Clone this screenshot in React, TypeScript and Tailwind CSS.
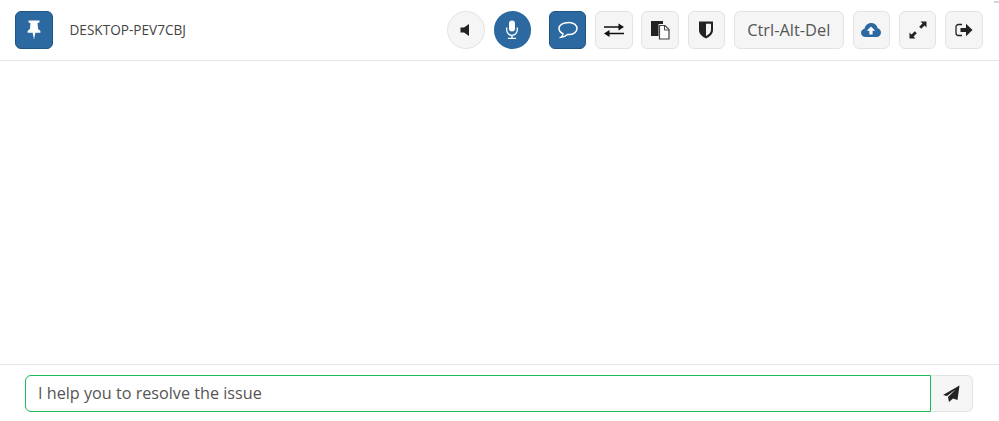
import type { ReactNode } from 'react'

const btnBase =
  'flex h-[38px] w-[37.5px] shrink-0 items-center justify-center rounded-md border border-[#e3e3e3] bg-[#f5f5f5]'
const btnActive =
  'flex h-[38px] w-[37.5px] shrink-0 items-center justify-center rounded-md border border-[#1f5585] bg-[#2c69a0]'

function Icon({ children }: { children: ReactNode }) {
  return (
    <svg width={22} height={22} viewBox="0 0 22 22">
      {children}
    </svg>
  )
}

export default function App() {
  return (
    <div className="relative flex h-[421px] w-[999px] flex-col bg-white font-['Open_Sans',sans-serif] text-[#333]">
      <div className="absolute top-px right-0 h-[2px] w-[5px] bg-[#d5d5d5]" />

      {/* Top toolbar */}
      <div className="flex h-[61px] items-center border-b border-[#e5e5e5] pr-[16.5px] pl-[15px]">
        <button className={btnActive}>
          <Icon>
            <path d="M5.5 1.500h11v1.800l-2 1 .6 5.700 2.300 2v1.800h-5l-1.400 6.700-1.400-6.700h-5v-1.800l2.300-2 .6-5.700-2-1z" fill="#fff" />
          </Icon>
        </button>
        <span className="ml-[17px] text-[13.6px] leading-none text-[#444]">DESKTOP-PEV7CBJ</span>

        <div className="ml-auto flex items-center gap-[8.75px]">
          <button className="flex h-[38px] w-[38px] items-center justify-center rounded-full border border-[#e3e3e3] bg-[#f5f5f5]">
            <Icon>
              <path d="M5.5 8.500h3.500l5-3.500v12l-5-3.500H5.500z" fill="#222" />
            </Icon>
          </button>
          <button className="flex h-[38px] w-[37.5px] items-center justify-center rounded-full bg-[#2c69a0]">
            <Icon>
              <rect x="8" y="1.500" width="6" height="11" rx="3" fill="#fff" />
              <path d="M5.700 8.500v2.500a5.300 5.300 0 0 0 10.600 0V8.500" fill="none" stroke="#fff" strokeWidth="1.300" />
              <path d="M11 16.300v2.500M7 19.300h8" fill="none" stroke="#fff" strokeWidth="1.300" />
            </Icon>
          </button>

          <button className={btnActive + ' ml-[9px]'}>
            <Icon>
              <path
                d="M12 3.500c4.400 0 8 2.600 8 6s-3.600 6-8 6h-1.500c-1.600 1.500-4 2.500-6.500 2.800 1.200-1 1.900-2.200 2-3.600C3.600 13.600 2 11.700 2 9.500c0-3.400 4-6 10-6z"
                fill="none"
                stroke="#fff"
                strokeWidth="1.500"
              />
            </Icon>
          </button>
          <button className={btnBase}>
            <Icon>
              <path d="M1 8h16" stroke="#111" strokeWidth="1.500" fill="none" />
              <path d="M15.500 4.500L21 8l-5.500 3.500z" fill="#111" />
              <path d="M21 14.500H5" stroke="#111" strokeWidth="1.500" fill="none" />
              <path d="M6.500 11L1 14.500 6.500 18z" fill="#111" />
            </Icon>
          </button>
          <button className={btnBase}>
            <Icon>
              <path d="M2 2h12v3H9.500v12H2z" fill="#222" />
              <path d="M10.500 6.500h5.500l4 4v9.500h-9.500z" fill="#fff" stroke="#444" strokeWidth="1.200" />
              <path d="M15.500 6.500v4.500h4.500" fill="none" stroke="#444" strokeWidth="1" />
            </Icon>
          </button>
          <button className={btnBase}>
            <Icon>
              <path d="M4 2.500h14v8.500c0 4-3.200 6.600-7 8.500-3.800-1.900-7-4.500-7-8.500z" fill="#222" />
              <path d="M11 4.700h5v6.300c0 2.700-2.300 4.500-5 6z" fill="#f5f5f5" />
            </Icon>
          </button>
          <button className="flex h-[38px] w-[110px] items-center justify-center rounded-md border border-[#e3e3e3] bg-[#f5f5f5] text-[16.4px] text-[#555]">
            Ctrl-Alt-Del
          </button>
          <button className={btnBase}>
            <Icon>
              <path
                d="M5.500 18C3 18 1 16.200 1 13.800c0-2.100 1.500-3.800 3.500-4.100C5.200 6.300 7.800 4 11.200 4c3.300 0 5.800 2.200 6.400 5.200 2 .4 3.400 2.100 3.400 4.300 0 2.500-2 4.500-4.500 4.500z"
                fill="#2c69a0"
              />
              <path d="M11 7.500l4.200 4.300h-2.600v3.700H9.400v-3.700H6.800z" fill="#fff" />
            </Icon>
          </button>
          <button className={btnBase}>
            <Icon>
              <path d="M13.500 2.500h6v6l-2-2-3.300 3.300-2-2L15.500 4.500z" fill="#222" />
              <path d="M8.500 19.500h-6v-6l2 2 3.300-3.300 2 2-3.300 3.300z" fill="#222" />
            </Icon>
          </button>
          <button className={btnBase}>
            <Icon>
              <path d="M9 5.500H5.500A2.500 2.500 0 0 0 3 8v6a2.500 2.500 0 0 0 2.500 2.500H9" fill="none" stroke="#222" strokeWidth="1.300" />
              <path d="M7.500 9h5.500V4.700l6.500 6.300-6.500 6.300V13H7.500z" fill="#222" />
            </Icon>
          </button>
        </div>
      </div>

      {/* Empty chat area */}
      <div className="flex-1" />

      {/* Message input */}
      <div className="flex h-[57px] items-start border-t border-[#e5e5e5] pt-[10px] pr-[26px] pl-[25px]">
        <div className="flex h-[37px] flex-1 items-center rounded-l-md border border-[#1db954] bg-white pb-px pl-[12px] text-[16.2px] text-[#555]">
          I help you to resolve the issue
        </div>
        <button className="flex h-[37px] w-[42px] items-center justify-center rounded-r-md border border-l-0 border-[#e3e3e3] bg-[#f5f5f5]">
          <Icon>
            <path d="M18.500 2.500L16.500 17l-4.500-1.500-4 3.500-1-5 7.500-7.500-8.500 6.500L2 12z" fill="#222" />
          </Icon>
        </button>
      </div>
    </div>
  )
}
